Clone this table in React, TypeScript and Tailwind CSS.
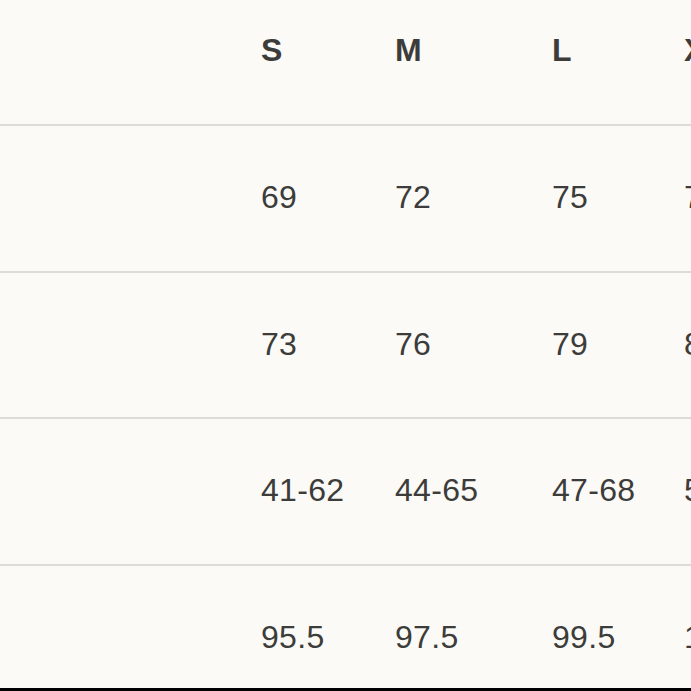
import React from "react";

const sizes = ["S", "M", "L", "XL"];
const rows = [
  ["69", "72", "75", "78"],
  ["73", "76", "79", "82"],
  ["41-62", "44-65", "47-68", "50-71"],
  ["95.5", "97.5", "99.5", "101.5"],
];
const widths = ["w-[134px]", "w-[157px]", "w-[132px]", "w-[140px]"];

export default function App() {
  return (
    <div
      className="w-[691px] h-[691px] overflow-hidden bg-[#fbfaf6] text-[#3c3c3a] border-b-[3px] border-black"
      style={{ fontFamily: '"Liberation Sans", Arial, sans-serif' }}
    >
      <div className="flex h-[126px] border-b-2 border-[#dddbd5] pt-[34px] whitespace-nowrap">
        <div className="w-[261px] shrink-0" />
        {sizes.map((s, i) => (
          <div key={s} className={`${widths[i]} shrink-0 text-[32px] leading-none font-bold`}>
            {s}
          </div>
        ))}
      </div>
      {rows.map((r, ri) => (
        <div
          key={ri}
          className="flex h-[146.5px] border-b-2 border-[#dddbd5] pt-[55px] whitespace-nowrap"
        >
          <div className="w-[261px] shrink-0" />
          {r.map((v, i) => (
            <div key={i} className={`${widths[i]} shrink-0 text-[32px] leading-none tracking-[0.3px]`}>
              {v}
            </div>
          ))}
        </div>
      ))}
    </div>
  );
}
